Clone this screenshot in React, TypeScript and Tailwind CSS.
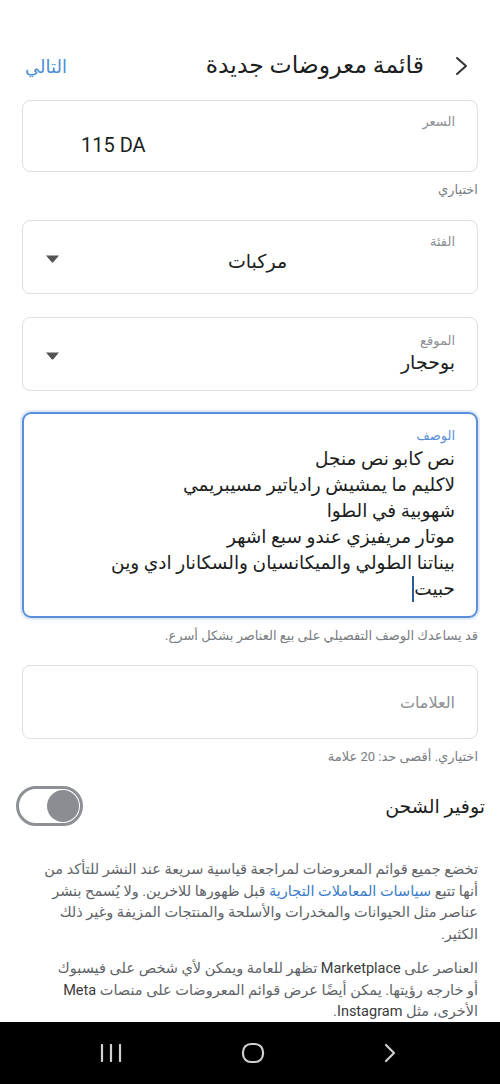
import React from "react";

const font = { fontFamily: '"Roboto", "DejaVu Sans", "Noto Sans", sans-serif' };

function Triangle() {
  return (
    <svg width="15" height="8" viewBox="0 0 15 8" className="shrink-0">
      <path d="M1 0.5 H14 L8.3 7.2 Q7.5 8 6.7 7.2 Z" fill="#555" />
    </svg>
  );
}

export default function App() {
  return (
    <div dir="rtl" className="relative w-[500px] h-[1084px] overflow-hidden bg-white text-[#1c1e21]" style={font}>
      {/* Header */}
      <div className="h-[100px] pt-[32px] pr-[30px] pl-[25px] flex items-center">
        <svg width="16" height="20" viewBox="0 0 16 20" className="shrink-0">
          <path d="M3 2 L12 10 L3 18" fill="none" stroke="#333" strokeWidth="2" strokeLinecap="round" strokeLinejoin="round" />
        </svg>
        <div className="mr-[30px] text-[23.5px] text-[#1c1e21]">قائمة معروضات جديدة</div>
        <div className="mr-auto text-[18px] text-[#4a8fd6]">التالي</div>
      </div>

      <div className="px-[22px]">
        {/* Price */}
        <div className="h-[72px] rounded-[8px] border border-[#dcdfe3] pr-[22px] pl-[58px] pt-[12px] flex flex-col">
          <div className="text-[13px] leading-[18px] text-[#8d9094]">السعر</div>
          <div className="flex justify-end">
            <span dir="ltr" className="text-[20px] leading-[28px] text-[#1c1e21]">115 DA</span>
          </div>
        </div>
        <div className="mt-[10px] text-[13px] leading-[16px] text-[#7a7d81]">اختياري</div>

        {/* Category */}
        <div className="mt-[22px] h-[74px] rounded-[8px] border border-[#dcdfe3] pr-[22px] pl-[22px] pt-[12px] flex flex-col">
          <div className="text-[13px] leading-[18px] text-[#8d9094]">الفئة</div>
          <div className="flex items-center">
            <div className="flex-1 text-center text-[19px] leading-[26px] -mt-[2px]">مركبات</div>
            <div className="-mt-[8px]"><Triangle /></div>
          </div>
        </div>

        {/* Location */}
        <div className="mt-[23px] h-[74px] rounded-[8px] border border-[#dcdfe3] pr-[22px] pl-[22px] pt-[14px] flex flex-col">
          <div className="text-[13px] leading-[18px] text-[#8d9094]">الموقع</div>
          <div className="flex items-center">
            <div className="flex-1 text-[19px] leading-[26px]">بوحجار</div>
            <div className="-mt-[14px]"><Triangle /></div>
          </div>
        </div>

        {/* Description */}
        <div className="mt-[21px] h-[206px] rounded-[9px] border-2 border-[#5a8fd8] shadow-[0_0_0_2px_rgba(90,143,216,0.18)] pr-[21px] pl-[21px] pt-[13px] flex flex-col">
          <div className="text-[13px] leading-[18px] text-[#5a8fd8]">الوصف</div>
          <div className="text-[18.5px] leading-[26px] text-[#1c1e21] mt-[1px]">
            <div>نص كابو نص منجل</div>
            <div>لاكليم ما يمشيش رادياتير مسيبريمي</div>
            <div>شهوبية في الطوا</div>
            <div>موتار مريفيزي عندو سبع اشهر</div>
            <div>بيناتنا الطولي والميكانسيان والسكانار ادي وين</div>
            <div className="flex items-center">
              <span>حبيت</span>
              <span className="inline-block w-[2px] h-[26px] bg-[#2f5b9c]"></span>
            </div>
          </div>
        </div>
        <div className="mt-[10px] text-[13px] leading-[16px] text-[#7a7d81]">قد يساعدك الوصف التفصيلي على بيع العناصر بشكل أسرع.</div>

        {/* Tags */}
        <div className="mt-[21px] h-[74px] rounded-[8px] border border-[#dcdfe3] pr-[22px] flex items-center">
          <div className="text-[16px] text-[#8d9094] mt-[2px]">العلامات</div>
        </div>
        <div className="mt-[10px] text-[13px] leading-[16px] text-[#7a7d81]">اختياري. أقصى حد: 20 علامة</div>
      </div>

      {/* Shipping toggle */}
      <div className="mt-[21px] h-[40px] pr-[15px] pl-[16px] flex items-center justify-between">
        <div className="text-[19px] text-[#1c1e21] mt-[3px]">توفير الشحن</div>
        <div className="w-[67px] h-[40px] rounded-full border-[3px] border-[#8d9094] flex items-center justify-start pr-[1px]">
          <div className="w-[32px] h-[32px] rounded-full bg-[#8a8d92]"></div>
        </div>
      </div>

      {/* Info paragraphs */}
      <div className="mt-[33px] pr-[22px] pl-[22px] text-[14.5px] leading-[21.5px] text-[#606367]">
        <p>
          <span className="block">تخضع جميع قوائم المعروضات لمراجعة قياسية سريعة عند النشر للتأكد من</span>
          <span className="block">
            أنها تتبع <span className="text-[#3b7bc8]">سياسات المعاملات التجارية</span> قبل ظهورها للاخرين. ولا يُسمح بنشر
          </span>
          <span className="block">عناصر مثل الحيوانات والمخدرات والأسلحة والمنتجات المزيفة وغير ذلك</span>
          <span className="block">الكثير.</span>
        </p>
        <p className="mt-[13px]">
          <span className="block">
            العناصر على <span className="text-[#3a3b3c]">Marketplace</span> تظهر للعامة ويمكن لأي شخص على فيسبوك
          </span>
          <span className="block">
            أو خارجه رؤيتها. يمكن أيضًا عرض قوائم المعروضات على منصات <span className="text-[#3a3b3c]">Meta</span>
          </span>
          <span className="block">
            الأخرى، مثل <span className="text-[#3a3b3c]">Instagram</span>.
          </span>
        </p>
      </div>

      {/* System nav bar */}
      <div dir="ltr" className="absolute bottom-0 left-0 w-[500px] h-[62px] bg-black flex items-center">
        <div className="w-[500px] flex items-center justify-between pl-[100px] pr-[103px]">
          <svg width="22" height="18" viewBox="0 0 22 18">
            <path d="M2 1 V17 M11 1 V17 M20 1 V17" stroke="#cfcfcf" strokeWidth="2.2" strokeLinecap="round" />
          </svg>
          <svg width="24" height="22" viewBox="0 0 24 22">
            <rect x="2" y="2" width="20" height="18" rx="8" fill="none" stroke="#cfcfcf" strokeWidth="2.2" />
          </svg>
          <svg width="14" height="20" viewBox="0 0 14 20">
            <path d="M3 2 L11 10 L3 18" fill="none" stroke="#cfcfcf" strokeWidth="2.2" strokeLinecap="round" strokeLinejoin="round" />
          </svg>
        </div>
      </div>
    </div>
  );
}
